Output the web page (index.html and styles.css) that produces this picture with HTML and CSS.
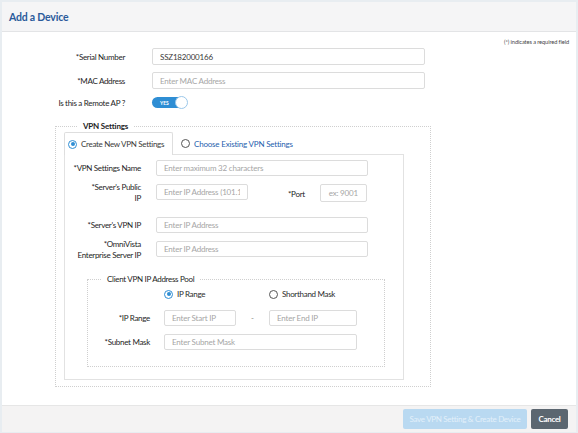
FILE: index.html
```html
<!DOCTYPE html>
<html lang="en">
<head>
    <meta charset="UTF-8">
    <title>Add a Device</title>
    <link rel="stylesheet" href="styles.css">
</head>
<body>
    <div class="modal">
        <div class="modal-header">Add a Device</div>

        <div class="modal-body">
            <div class="required-note">(*) indicates a required field</div>

            <div class="form-row">
                <label>*Serial Number</label>
                <input type="text" class="wide" value="SSZ182000166">
            </div>
            <div class="form-row">
                <label>*MAC Address</label>
                <input type="text" class="wide" placeholder="Enter MAC Address">
            </div>
            <div class="form-row toggle-row">
                <label>Is this a Remote AP ?</label>
                <span class="toggle"><span class="toggle-text">YES</span><span class="knob"></span></span>
            </div>

            <fieldset class="vpn-box">
                <legend>VPN Settings</legend>
                <div class="tabs">
                    <div class="tab active"><span class="radio checked"></span>Create New VPN Settings</div>
                    <div class="tab link"><span class="radio"></span>Choose Existing VPN Settings</div>
                </div>
                <div class="tab-panel">
                    <div class="panel-row">
                        <label>*VPN Settings Name</label>
                        <input type="text" class="name-input" placeholder="Enter maximum 32 characters">
                    </div>
                    <div class="panel-row top public-row">
                        <label>*Server's Public<br>IP</label>
                        <input type="text" class="ip-input" placeholder="Enter IP Address (101.1">
                        <span class="port-label">*Port</span>
                        <input type="text" class="port-input" placeholder="ex: 9001">
                    </div>
                    <div class="panel-row">
                        <label>*Server's VPN IP</label>
                        <input type="text" class="name-input" placeholder="Enter IP Address">
                    </div>
                    <div class="panel-row top">
                        <label>*OmniVista<br>Enterprise Server IP</label>
                        <input type="text" class="name-input" placeholder="Enter IP Address">
                    </div>

                    <fieldset class="pool-box">
                        <legend>Client VPN IP Address Pool</legend>
                        <div class="radio-row">
                            <span class="radio-opt first"><span class="radio checked"></span>IP Range</span>
                            <span class="radio-opt"><span class="radio"></span>Shorthand Mask</span>
                        </div>
                        <div class="pool-row">
                            <label>*IP Range</label>
                            <input type="text" class="start-input" placeholder="Enter Start IP">
                            <span class="dash">-</span>
                            <input type="text" class="end-input" placeholder="Enter End IP">
                        </div>
                        <div class="pool-row mask-row">
                            <label>*Subnet Mask</label>
                            <input type="text" class="mask-input" placeholder="Enter Subnet Mask">
                        </div>
                    </fieldset>
                </div>
            </fieldset>
        </div>

        <div class="modal-footer">
            <button class="btn-save" disabled>Save VPN Setting &amp; Create Device</button>
            <button class="btn-cancel">Cancel</button>
        </div>
    </div>
</body>
</html>
```

FILE: styles.css
```css
* { box-sizing: border-box; font-family: 'Lato', 'Open Sans', sans-serif; }
body { margin: 0; padding: 0; background: #fff; }
.modal { width: 578px; height: 433px; border: 2px solid #e8edf1; border-bottom-width: 1px; display: flex; flex-direction: column; background: #fff; }
.modal-header { height: 30px; flex-shrink: 0; background: #f5f5f6; border-bottom: 1px solid #e3e4e6; padding: 0 7px; display: flex; align-items: center; font-size: 10.5px; font-weight: bold; letter-spacing: -0.2px; color: #2a5b9b; }
.modal-body { flex: 1; padding-top: 6px; }
.required-note { text-align: right; font-size: 5.7px; letter-spacing: -0.1px; color: #444; padding-right: 7px; height: 10px; }

.form-row { display: flex; align-items: center; margin-bottom: 7px; }
label { font-size: 8px; letter-spacing: -0.3px; color: #1e1e1e; text-align: right; line-height: 10px; }
.form-row label { width: 123px; margin-right: 27px; }
.toggle-row { height: 13px; margin-top: 1px; margin-bottom: 0; }

input { height: 17px; border: 1px solid #dcdcdc; border-radius: 2px; padding: 0 7px; font-size: 8px; letter-spacing: -0.2px; color: #3a3a3a; background: #fff; outline: none; }
input::placeholder { color: #a6a6a6; }
.wide { width: 273px; }

.toggle { position: relative; width: 35px; height: 11px; border-radius: 6px; background: #2f8ed4; display: inline-flex; align-items: center; }
.toggle-text { font-size: 5px; color: #fff; font-weight: bold; padding-left: 8px; letter-spacing: -0.1px; }
.knob { position: absolute; right: -1px; top: -1px; width: 13px; height: 13px; border-radius: 50%; background: #fff; border: 1px solid #9cc8ea; }

fieldset { border: 1px dotted #cfcfcf; margin: 0; }
legend { font-size: 8px; letter-spacing: -0.3px; color: #1e1e1e; padding: 0 5px; line-height: 10px; }
.vpn-box { width: 376px; margin: 12px 0 0 53px; padding: 1px 26px 6px 8px; }
.vpn-box > legend { margin-left: 14px; font-weight: bold; letter-spacing: -0.2px; }

.tabs { display: flex; height: 23px; position: relative; z-index: 1; }
.tab { display: flex; align-items: center; font-size: 8px; letter-spacing: -0.3px; color: #3a3a3a; padding: 0 3px; }
.tab.active { background: #fff; border: 1px solid #dedede; border-bottom: none; border-radius: 2px 2px 0 0; width: 109px; }
.tab.link { color: #1f5fae; padding-left: 8px; letter-spacing: -0.2px; }
.tab-panel { border: 1px solid #e2e2e2; margin-top: -1px; padding: 5px 0 12px 0; }

.radio { display: inline-block; flex-shrink: 0; width: 9px; height: 9px; border-radius: 50%; border: 1px solid #555; margin-right: 4px; position: relative; background: #fff; }
.radio.checked { border-color: #2f8ed4; }
.radio.checked::after { content: ""; position: absolute; left: 1.5px; top: 1.5px; width: 4px; height: 4px; border-radius: 50%; background: #2f8ed4; }

.panel-row { display: flex; align-items: center; margin-bottom: 8px; }
.panel-row.top { align-items: flex-start; }
.panel-row label { width: 76px; margin-right: 15px; }
.panel-row.top label { margin-top: -2px; line-height: 11px; }
.public-row { margin-bottom: 13px; }
.name-input { width: 212px; height: 16px; }
.ip-input { width: 92px; height: 16px; }
.port-label { font-size: 8px; letter-spacing: -0.3px; color: #1e1e1e; margin: 5px 15px 0 40px; }
.port-input { width: 47px; height: 18px; text-align: center; }

.pool-box { width: 298px; margin: 13px 0 0 22px; padding: 5px 0 16px 0; }
.pool-box > legend { margin-left: 14px; }
.radio-row { display: flex; align-items: center; padding-left: 76px; height: 10px; font-size: 8px; letter-spacing: -0.3px; color: #2b2b2b; }
.radio-opt { display: inline-flex; align-items: center; }
.radio-opt.first { width: 105px; }
.pool-row { display: flex; align-items: center; margin-top: 11px; }
.mask-row { margin-top: 8px; }
.pool-row label { width: 62px; margin-right: 14px; }
.start-input { width: 72px; height: 16px; }
.dash { width: 33px; text-align: center; font-size: 8px; color: #888; }
.end-input { width: 88px; height: 16px; }
.mask-input { width: 193px; height: 16px; }

.modal-footer { height: 27px; flex-shrink: 0; background: #f4f3f3; border-top: 1px solid #e6e6e6; display: flex; align-items: center; justify-content: flex-end; padding-right: 8px; gap: 4px; }
button { height: 20px; border: none; border-radius: 2px; font-size: 8px; letter-spacing: -0.3px; color: #fff; padding: 0; }
.btn-save { width: 124px; background: #b9d9f1; color: #e3f0fa; }
.btn-cancel { width: 37px; background: #5b6670; font-weight: bold; }
```
